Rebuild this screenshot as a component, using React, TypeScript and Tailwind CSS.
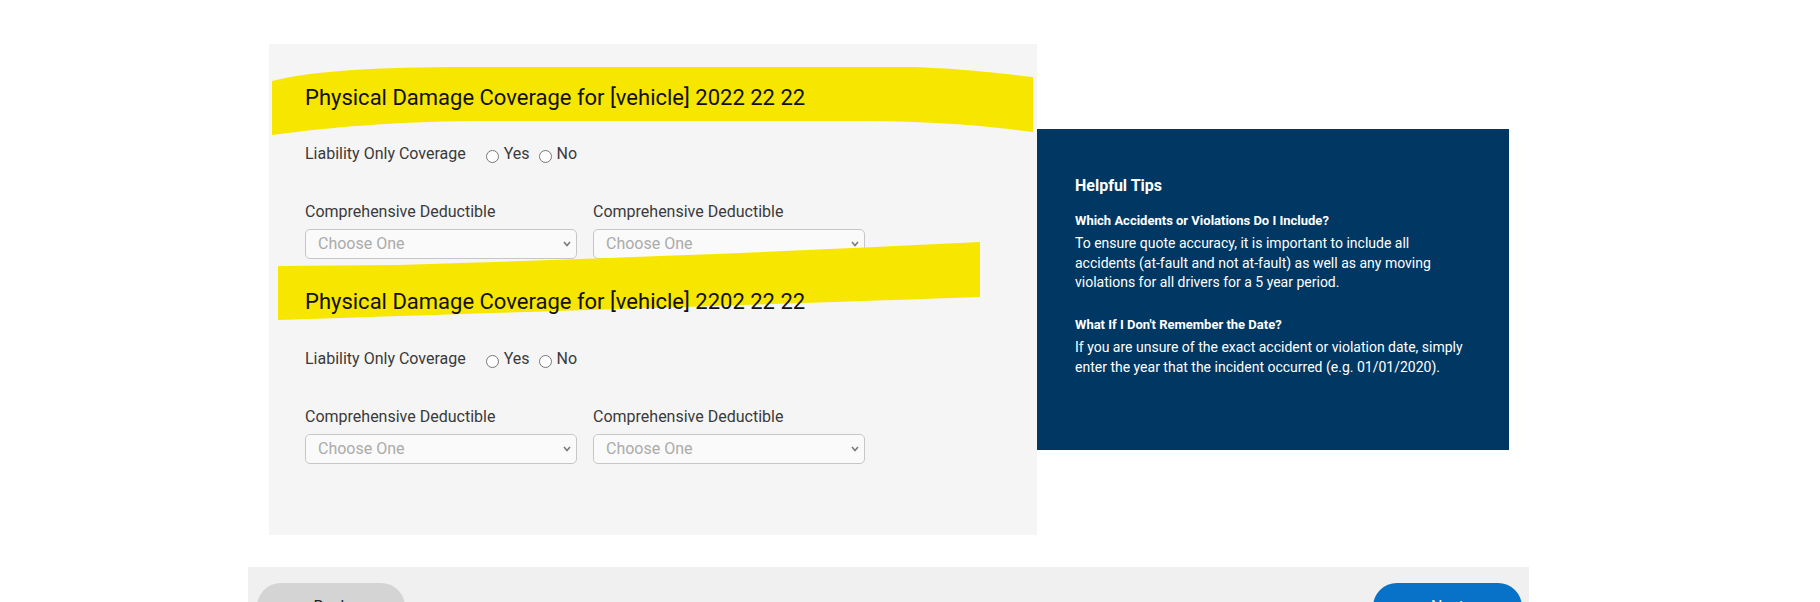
import React from "react";

const sections = [
  { vehicle: "2022 22 22", brush: "one" },
  { vehicle: "2202 22 22", brush: "two" },
];

function BrushOne() {
  return (
    <svg
      className="absolute left-[3px] top-[-17px] w-[761px] h-[68px]"
      viewBox="0 0 761 68"
      preserveAspectRatio="none"
    >
      <path
        d="M0,14 C40,4 100,0 200,0 L640,0 C700,2 740,8 761,10 L761,65 C720,60 680,55 600,54 L200,54 C120,55 60,60 0,68 Z"
        fill="#f6e600"
      />
    </svg>
  );
}

function BrushTwo() {
  return (
    <svg
      className="absolute left-[9px] top-[-46px] w-[702px] h-[78px]"
      viewBox="0 0 702 78"
      preserveAspectRatio="none"
    >
      <path
        d="M0,24 L120,23 Q420,14 702,0 L702,55 Q500,62 0,78 Z"
        fill="#f6e600"
      />
    </svg>
  );
}

function Select() {
  return (
    <div className="relative w-[272px]">
      <select
        defaultValue=""
        className="appearance-none w-[272px] h-[30px] border border-[#c6c6c6] rounded-[5px] bg-[#fafafa] pl-[12px] text-[16px] text-[#ababab] outline-none"
      >
        <option value="" disabled>
          Choose One
        </option>
      </select>
      <svg
        className="absolute right-[6px] top-[12px] w-[8px] h-[6px] pointer-events-none"
        viewBox="0 0 8 6"
      >
        <path d="M1,1 L4,4.5 L7,1" fill="none" stroke="#7a7a7a" strokeWidth="1.6" />
      </svg>
    </div>
  );
}

function CoverageSection({ vehicle, brush, idx }: { vehicle: string; brush: string; idx: number }) {
  return (
    <div>
      <div className="relative">
        {brush === "one" ? <BrushOne /> : <BrushTwo />}
        <h2 className="relative pl-[36px] text-[22px] leading-[28px] text-[#111]">
          Physical Damage Coverage for [vehicle] {vehicle}
        </h2>
      </div>

      {/* Liability radios */}
      <div
        className={
          "flex items-center pl-[36px] text-[16px] leading-[24px] text-[#3a3a3a] " +
          (idx === 0 ? "mt-[30px]" : "mt-[31px]")
        }
      >
        <span>Liability Only Coverage</span>
        <input
          type="radio"
          name={"liability" + idx}
          className="w-[13px] h-[13px] m-0 ml-[20px] mt-[4px]"
        />
        <span className="ml-[5px]">Yes</span>
        <input
          type="radio"
          name={"liability" + idx}
          className="w-[13px] h-[13px] m-0 ml-[9px] mt-[4px]"
        />
        <span className="ml-[5px]">No</span>
      </div>

      {/* Deductibles */}
      <div className="flex gap-[16px] pl-[36px] mt-[34px]">
        {[0, 1].map((i) => (
          <div key={i}>
            <label className="block text-[16px] leading-[24px] text-[#3a3a3a]">
              Comprehensive Deductible
            </label>
            <div className="mt-[5px]">
              <Select />
            </div>
          </div>
        ))}
      </div>
    </div>
  );
}

export default function App() {
  return (
    <div className="min-h-screen bg-white font-['Roboto',sans-serif] overflow-hidden">
      <div className="ml-[248px] w-[1281px] pt-[44px]">
        <div className="flex items-start pl-[21px]">
          {/* Form panel */}
          <section className="w-[768px] h-[491px] bg-[#f5f5f5] pt-[40px]">
            <CoverageSection vehicle={sections[0].vehicle} brush="one" idx={0} />
            <div className="mt-[29px]">
              <CoverageSection vehicle={sections[1].vehicle} brush="two" idx={1} />
            </div>
          </section>

          {/* Tips */}
          <aside className="mt-[85px] w-[472px] h-[321px] bg-[#003863] text-white pt-[47px] pl-[38px]">
            <h3 className="text-[16px] leading-[20px] font-bold">Helpful Tips</h3>
            <div className="w-[394px] text-[14px] leading-[19.5px]">
              <p className="mt-[15px] text-[13px] font-bold">Which Accidents or Violations Do I Include?</p>
              <p className="mt-[3.5px]">
                To ensure quote accuracy, it is important to include all accidents (at-fault and not
                at-fault) as well as any moving violations for all drivers for a 5 year period.
              </p>
              <p className="mt-[22.5px] text-[13px] font-bold">What If I Don't Remember the Date?</p>
              <p className="mt-[3.5px]">
                If you are unsure of the exact accident or violation date, simply enter the year that
                the incident occurred (e.g. 01/01/2020).
              </p>
            </div>
          </aside>
        </div>

        {/* Nav bar */}
        <div className="mt-[32px] h-[90px] bg-[#f0f0f0] flex justify-between items-start pt-[16px] pl-[9px] pr-[7px]">
          <button className="w-[148px] h-[48px] rounded-full bg-[#d4d4d4] text-[16px] leading-[24px] text-[#222]">
            Back
          </button>
          <button className="w-[149px] h-[48px] rounded-full bg-[#0772c8] text-[16px] leading-[24px] text-white">
            Next
          </button>
        </div>
      </div>
    </div>
  );
}
